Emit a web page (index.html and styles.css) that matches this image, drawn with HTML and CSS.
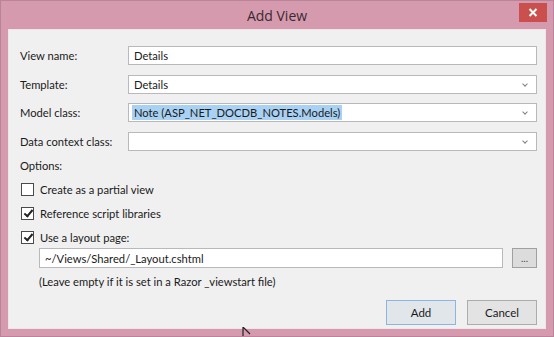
FILE: index.html
```html
<!DOCTYPE html>
<html lang="en">
<head>
    <meta charset="UTF-8">
    <title>Add View</title>
    <link rel="stylesheet" href="styles.css">
</head>
<body>
    <div class="window">
        <div class="titlebar">
            <span class="title">Add View</span>
            <button class="close-btn" aria-label="Close">
                <svg width="10" height="9" viewBox="0 0 10 9"><path d="M1.5 1 L8.5 8 M8.5 1 L1.5 8" stroke="#fff" stroke-width="2"/></svg>
            </button>
        </div>

        <div class="content">
            <div class="form-grid">
                <label>View name:</label>
                <div class="field">Details</div>

                <label>Template:</label>
                <div class="field select">Details<span class="arrow"></span></div>

                <label>Model class:</label>
                <div class="field select"><span class="selected">Note (ASP_NET_DOCDB_NOTES.Models)</span><span class="arrow"></span></div>

                <label>Data context class:</label>
                <div class="field select"><span class="arrow"></span></div>
            </div>

            <div class="options-title">Options:</div>

            <div class="check-list">
                <div class="check-row">
                    <span class="checkbox"></span>
                    <span>Create as a partial view</span>
                </div>
                <div class="check-row">
                    <span class="checkbox checked"></span>
                    <span>Reference script libraries</span>
                </div>
                <div class="check-row">
                    <span class="checkbox checked"></span>
                    <span>Use a layout page:</span>
                </div>
            </div>

            <div class="layout-row">
                <div class="field layout-field">~/Views/Shared/_Layout.cshtml</div>
                <button class="browse-btn">...</button>
            </div>
            <div class="hint">(Leave empty if it is set in a Razor _viewstart file)</div>

            <div class="actions">
                <button class="btn btn-default">Add</button>
                <button class="btn">Cancel</button>
            </div>

            <svg class="cursor" width="12" height="10" viewBox="0 0 12 10"><path d="M1 0 L1 9 M1 0 L8 7" stroke="#222" stroke-width="1.2" fill="none"/></svg>
        </div>
    </div>
</body>
</html>
```

FILE: styles.css
```css
* {
    margin: 0;
    padding: 0;
    box-sizing: border-box;
}

body {
    background-color: #ffffff;
    font-family: 'Lato', 'Liberation Sans', sans-serif;
    font-size: 11.2px;
    color: #1a1a1a;
}

/* Window frame */
.window {
    width: 554px;
    height: 337px;
    background-color: #d69aaf;
    border: 1px solid #b9849a;
    padding: 0 7px 7px 7px;
    display: flex;
    flex-direction: column;
}

.titlebar {
    flex-shrink: 0;
    height: 28px;
    display: flex;
    justify-content: center;
    align-items: center;
    position: relative;
}

.title {
    font-family: 'Open Sans', 'Liberation Sans', sans-serif;
    font-size: 14px;
    color: #3a2a30;
}

.close-btn {
    position: absolute;
    right: -1px;
    top: 2px;
    width: 28px;
    height: 19px;
    border: none;
    background-color: #c9504c;
    display: flex;
    justify-content: center;
    align-items: center;
}

/* Dialog body */
.content {
    flex: 1;
    min-height: 0;
    position: relative;
    background-color: #f0f0f0;
    border: 1px solid #efe4e8;
    padding: 16px 8px 0 11px;
}

.form-grid {
    display: grid;
    grid-template-columns: 108px 1fr;
    grid-auto-rows: 19px;
    row-gap: 9.5px;
    align-items: center;
}

.field {
    height: 19px;
    background: #ffffff;
    border: 1px solid #b9b9bd;
    padding: 0 5px;
    display: flex;
    align-items: center;
    position: relative;
}

.select .arrow {
    position: absolute;
    right: 9px;
    top: 6px;
    width: 4px;
    height: 4px;
    border-right: 1.3px solid #808080;
    border-bottom: 1.3px solid #808080;
    transform: rotate(45deg);
}

.selected {
    background-color: #a9d1f3;
    margin-left: -2px;
    padding: 1px 2px;
}

.options-title {
    margin-top: 7.5px;
    line-height: 16px;
}

.check-list {
    display: flex;
    flex-direction: column;
    gap: 8px;
    margin-top: 7px;
}

.check-row {
    display: flex;
    align-items: center;
    gap: 6px;
    height: 16px;
    padding-left: 1px;
}

.checkbox {
    width: 13px;
    height: 13px;
    border: 1px solid #4a4a4a;
    background: #ffffff;
    position: relative;
}

.checkbox.checked::after {
    content: "";
    position: absolute;
    left: 3.5px;
    top: 0.5px;
    width: 3px;
    height: 7px;
    border-right: 2px solid #222;
    border-bottom: 2px solid #222;
    transform: rotate(40deg);
}

.layout-row {
    display: flex;
    align-items: center;
    gap: 9px;
    margin-top: 3px;
    padding-left: 19px;
}

.layout-field {
    width: 465px;
    height: 20px;
}

.browse-btn {
    width: 25px;
    height: 20px;
    background: #dcdcdc;
    border: 1px solid #a0a0a0;
    font-family: inherit;
    font-size: 10px;
    line-height: 8px;
    color: #444;
}

.hint {
    margin-top: 6px;
    padding-left: 19px;
    line-height: 16px;
}

.actions {
    display: flex;
    justify-content: flex-end;
    gap: 11px;
    margin-top: 10px;
}

.btn {
    width: 70px;
    height: 25px;
    background: #e3e3e3;
    border: 1px solid #acacac;
    font-family: inherit;
    font-size: 11.5px;
    color: #1a1a1a;
}

.btn-default {
    border-color: #8cb6e0;
    background: #e1e6ea;
}

.cursor {
    position: absolute;
    left: 233px;
    bottom: -9px;
}
```
